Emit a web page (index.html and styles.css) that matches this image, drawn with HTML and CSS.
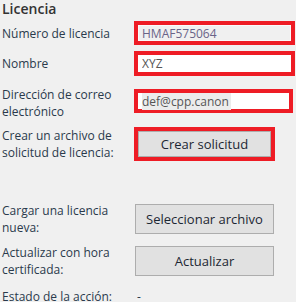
FILE: index.html
```html
<!DOCTYPE html>
<html lang="es">

<head>
    <meta charset="UTF-8">
    <meta name="viewport" content="width=device-width, initial-scale=1.0">
    <title>Licencia</title>
    <link rel="stylesheet" href="styles.css">
</head>

<body>
    <div class="panel">
        <h2 class="title">Licencia</h2>

        <div class="row row-number">
            <label class="label" for="licenseNumber">Número de licencia</label>
            <div class="mark mark-wide">
                <input class="field field-disabled" type="text" id="licenseNumber" value="HMAF575064" readonly>
            </div>
        </div>

        <div class="row row-name">
            <label class="label" for="userName">Nombre</label>
            <div class="mark mark-wide">
                <input class="field" type="text" id="userName" value="XYZ">
            </div>
        </div>

        <div class="row row-mail">
            <label class="label" for="userMail">Dirección de correo electrónico</label>
            <div class="mark mark-mail">
                <div class="field" id="userMail"><span class="selected">def@cpp.canon</span></div>
            </div>
        </div>

        <div class="row row-request">
            <span class="label">Crear un archivo de solicitud de licencia:</span>
            <div class="mark mark-button">
                <button class="btn" type="button">Crear solicitud</button>
            </div>
        </div>

        <div class="row row-upload">
            <span class="label">Cargar una licencia nueva:</span>
            <button class="btn btn-plain" type="button">Seleccionar archivo</button>
        </div>

        <div class="row row-update">
            <span class="label">Actualizar con hora certificada:</span>
            <button class="btn btn-plain" type="button">Actualizar</button>
        </div>

        <div class="row row-status">
            <span class="label">Estado de la acción:</span>
            <span class="status">-</span>
        </div>
    </div>
</body>

</html>
```

FILE: styles.css
```css
body {
    margin: 0;
    background-color: #f0f0f0;
    font-family: "Open Sans", "Noto Sans", sans-serif;
    font-size: 12px;
    color: #2a3a4c;
    overflow: hidden;
}

.panel {
    padding-left: 2px;
}

.title {
    margin: 0;
    font-size: 14px;
    font-weight: 600;
    line-height: 18px;
    color: #333;
}

.row {
    display: flex;
    align-items: center;
}

.label {
    width: 130px;
    flex-shrink: 0;
    line-height: 17px;
    padding-right: 2px;
}

.row-number {
    margin-top: 3px;
    height: 24px;
}

.row-name {
    margin-top: 6px;
    height: 25px;
}

.row-mail {
    margin-top: 10px;
    height: 34px;
}

.row-request {
    margin-top: 7px;
    height: 34px;
}

.row-upload {
    margin-top: 41px;
    height: 34px;
}

.row-update {
    margin-top: 8px;
    height: 34px;
}

.row-status {
    margin-top: 10px;
    height: 17px;
}

.mark {
    border: 4px solid #ee1c25;
    box-sizing: border-box;
    display: flex;
}

.mark-wide {
    width: 161px;
    height: 100%;
}

.mark-mail {
    width: 159px;
    height: 24px;
    align-self: flex-start;
    margin-top: 3px;
}

.mark-button {
    width: 141px;
    height: 34px;
}

.field {
    flex: 1;
    min-width: 0;
    margin: 0;
    border: 1px solid #fff;
    padding: 0 0 0 3px;
    background-color: #fff;
    font: inherit;
    color: #555;
    outline: none;
    display: flex;
    align-items: center;
}

.field-disabled {
    background-color: #f0f0f0;
    border-color: #fafafa;
    color: #6a6488;
}

.selected {
    background-color: #ececec;
    padding-right: 2px;
}

.btn {
    flex: 1;
    margin: 0;
    border: 1px solid #adadad;
    background-color: #e1e1e1;
    font: inherit;
    font-size: 13px;
    color: #1c2733;
    padding: 0;
}

.btn-plain {
    width: 139px;
    height: 30px;
    flex: none;
    margin-left: 1px;
}

.status {
    margin-left: 3px;
}
```
